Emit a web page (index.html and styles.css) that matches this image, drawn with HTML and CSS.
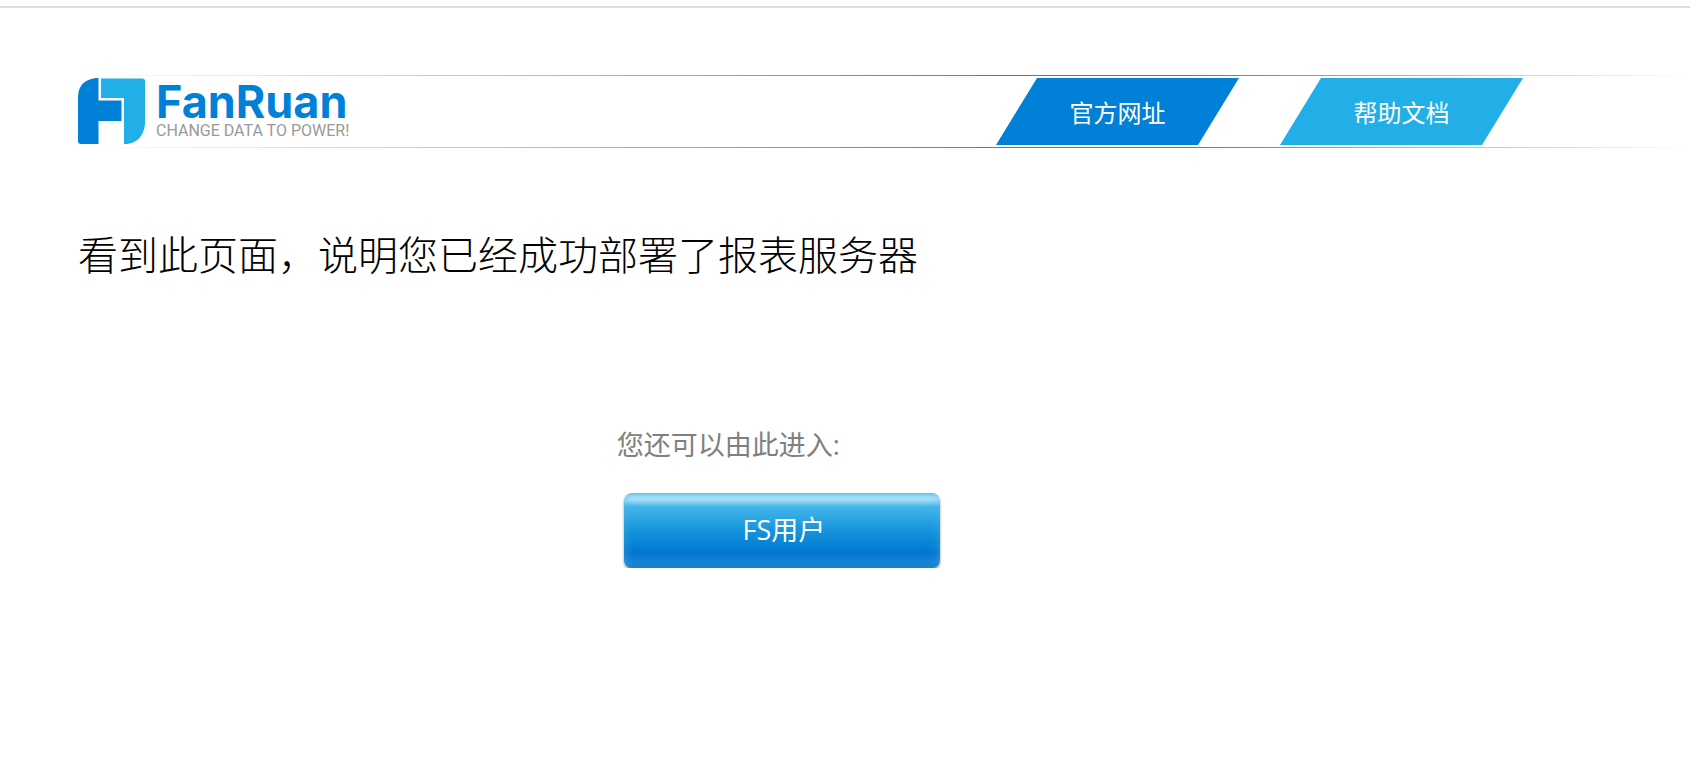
FILE: index.html
```
<!DOCTYPE html>
<html lang="zh-CN">
<head>
    <meta charset="UTF-8">
    <meta name="viewport" content="width=device-width, initial-scale=1.0">
    <title>FanRuan</title>
    <link rel="stylesheet" href="styles.css">
</head>
<body>
    <header class="header">
        <div class="logo">
            <svg class="logo-icon" viewBox="0 0 67 66" aria-hidden="true">
                <path fill="#0080d6" d="M18 0 H20.500 V22.500 H43.500 V43 H20.500 V66 H3 Q0 66 0 63 V18 Q1 2 18 0Z"/>
                <path fill="#22aee6" d="M23 0.500 H64 Q67 0.500 67 3 V46 Q65 64 49 66 H46 V20 H23Z"/>
            </svg>
            <div class="logo-text">
                <span class="logo-name">FanRuan</span>
                <span class="logo-slogan">CHANGE DATA TO POWER!</span>
            </div>
        </div>
        <nav class="nav">
            <a href="#" class="nav-link">官方网址</a>
            <a href="#" class="nav-link light">帮助文档</a>
        </nav>
    </header>

    <main>
        <h1 class="title">看到此页面，说明您已经成功部署了报表服务器</h1>
        <div class="entry">
            <p class="entry-tip">您还可以由此进入:</p>
            <button type="button" class="entry-btn">FS用户</button>
        </div>
    </main>
</body>
</html>
```

FILE: styles.css
```
*{
    margin: 0;
    padding: 0;
    box-sizing: border-box;
}
body{
    margin-top: 6px;
    border-top: 2px solid #dddddd;
    background-color: #ffffff;
    font-family: "Open Sans", "Noto Sans CJK SC", sans-serif;
}

/* 顶部 */
.header{
    display: flex;
    justify-content: space-between;
    align-items: center;
    height: 73px;
    margin-top: 67px;
    padding: 0 167px 0 78px;
    background-image:
        linear-gradient(to right, transparent 5%, #1b8fd8 60%, #1b8fd8 70%, transparent),
        linear-gradient(to right, transparent 5%, #1b8fd8 60%, #1b8fd8 70%, transparent);
    background-size: 100% 1px;
    background-position: top, bottom;
    background-repeat: no-repeat;
}
.logo{
    display: flex;
    align-items: center;
    gap: 11px;
    padding-bottom: 2px;
}
.logo-icon{
    width: 67px;
    height: 66px;
}
.logo-text{
    display: flex;
    flex-direction: column;
    white-space: nowrap;
}
.logo-name{
    font-family: Inter, sans-serif;
    font-size: 45px;
    font-weight: 700;
    line-height: 40px;
    color: #0080d6;
}
.logo-slogan{
    font-family: Roboto, sans-serif;
    font-size: 16px;
    font-weight: 400;
    line-height: 18px;
    color: #999999;
}
.nav{
    display: flex;
    gap: 41px;
}
.nav-link{
    width: 243px;
    height: 67px;
    line-height: 70px;
    text-align: center;
    font-size: 24px;
    color: #ffffff;
    text-decoration: none;
    background-color: #0080d6;
    clip-path: polygon(41px 0, 100% 0, calc(100% - 41px) 100%, 0 100%);
}
.nav-link.light{
    background-color: #22aee6;
}

/* 内容 */
.title{
    margin-top: 75px;
    padding-left: 78px;
    font-family: "Noto Sans CJK SC", sans-serif;
    font-size: 40px;
    font-weight: 300;
    line-height: 60px;
    color: #000000;
}
.entry{
    margin-top: 142px;
    padding-left: 36.5%;
}
.entry-tip{
    font-size: 27px;
    line-height: 40px;
    color: #808080;
}
.entry-btn{
    display: block;
    width: 316px;
    height: 75px;
    margin: 28px 0 0 7px;
    padding: 0 0 4px 4px;
    border: none;
    border-radius: 8px;
    font-family: inherit;
    font-size: 27px;
    color: #ffffff;
    cursor: pointer;
    background-image: linear-gradient(#62c8f2, #aee1f8 5%, #aee1f8 9%, #45b7ea 18%, #1594dc 50%, #0276d0 80%, #1480d4 92%, #0a6fc0);
    box-shadow: 0 2px 3px rgba(0, 0, 0, 0.4), inset 0 0 12px rgba(80, 180, 235, 0.5);
}
```
